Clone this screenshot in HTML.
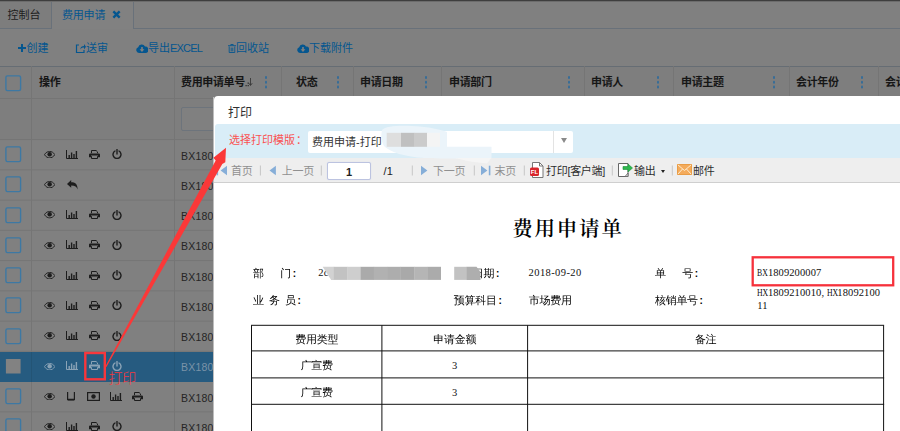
<!DOCTYPE html>
<html lang="zh-CN">
<head>
<meta charset="utf-8">
<title>费用申请</title>
<style>
html,body{margin:0;padding:0;}
body{width:900px;height:431px;overflow:hidden;position:relative;background:#808080;font-family:"Liberation Sans","Noto Sans CJK SC",sans-serif;font-size:11px;color:#1c1c1c;}
.abs{position:absolute;}
#bg{position:absolute;left:0;top:0;width:900px;height:431px;overflow:hidden;}
.topline{left:0;top:0;width:900px;height:1px;background:#3e3e3e;border-bottom:1px solid #6c6c6c;}
.tabbar{left:0;top:2px;width:900px;height:26px;border-bottom:1px solid #69717a;background:#808080;}
.tab{position:absolute;top:0;height:26px;line-height:27px;font-size:11px;text-align:center;box-sizing:border-box;white-space:nowrap;}
.tab1{left:0;width:52px;background:#7d7d7d;color:#1e1e1e;border-right:1px solid #69717a;text-align:left;padding-left:7.5px;}
.tab2{left:52px;width:82px;height:27px;background:#818181;color:#05568f;border-right:1px solid #69717a;text-align:left;padding-left:10px;letter-spacing:-0.2px;}
.tbtn{position:absolute;top:39px;height:18px;line-height:18px;color:#05568f;font-size:11px;white-space:nowrap;}
.tbtn svg{position:absolute;top:4px;}
.hline{position:absolute;left:0;width:900px;height:1px;}
.vline{position:absolute;top:66px;width:1px;height:365px;background:#757575;}
.hcell{position:absolute;top:67px;height:31px;line-height:30px;font-weight:bold;color:#161616;font-size:11px;white-space:nowrap;letter-spacing:-0.35px;}
.dots{position:absolute;top:76.300px;width:2.400px;height:2.400px;border-radius:50%;background:#376d98;box-shadow:0 4.700px 0 #376d98,0 9.400px 0 #376d98;}
.cb{position:absolute;left:5px;width:15px;height:15px;border:1px solid #3f7eaa;background:#808080;border-radius:1px;}
.bx{position:absolute;left:181px;font-size:10.5px;color:#252525;line-height:30px;height:30px;letter-spacing:0.2px;}
.ico{position:absolute;}
.sel{left:0;width:900px;background:#265b80;}
#modal{left:214px;top:96px;width:700px;height:400px;background:#fff;border-radius:4px 0 0 0;}
.m{position:absolute;white-space:nowrap;}
.tb{position:absolute;top:63px;height:24px;line-height:24px;font-size:11px;white-space:nowrap;letter-spacing:-0.3px;}
.sep{position:absolute;top:69px;width:1px;height:10px;background:#c9c9c9;}
.rp{position:absolute;white-space:nowrap;font-family:"Liberation Serif","WenQuanYi Zen Hei",serif;font-size:11px;color:#000;line-height:14px;letter-spacing:-0.3px;}
.cl{font-family:"Liberation Sans",sans-serif;font-weight:bold;font-size:10px;margin-left:1.8px;letter-spacing:0;}
.lat{font-family:"Liberation Serif",serif;font-size:10.5px;letter-spacing:0.1px;color:#111;}
.lt{display:inline-block;width:10.7px;transform:scaleX(0.74);transform-origin:0 50%;letter-spacing:0;}
.cell{position:absolute;text-align:center;font-family:"Liberation Serif","WenQuanYi Zen Hei",serif;font-size:11px;color:#000;line-height:14px;letter-spacing:-0.3px;}
</style>
</head>
<body>
<div id="bg">
  <div class="abs topline"></div>
  <div class="abs tabbar">
    <div class="tab tab1">控制台</div>
    <div class="tab tab2">费用申请<svg style="position:absolute;left:59.500px;top:8.300px" width="9" height="9" viewBox="0 0 8 8"><path d="M1.200 1.200L6.800 6.800M6.800 1.200L1.200 6.800" stroke="#05568f" stroke-width="2.100" fill="none"/></svg><span style="font-size:0">×</span></div>
  </div>
  <div class="tbtn" style="left:26.500px;"><svg style="left:-8.500px;top:4.800px" width="8" height="8" viewBox="0 0 8 8"><path d="M4 0V8M0 4H8" stroke="#05568f" stroke-width="2" fill="none"/></svg><span style="font-size:0">+</span>创建</div>
  <div class="tbtn" style="left:86px;"><svg style="left:-11px" width="11" height="11" viewBox="0 0 11 11"><path d="M4 2H1.5v7.5H9V7" fill="none" stroke="#05568f" stroke-width="1.2"/><path d="M5 6.5C5.5 4 7 3 9 3V1l2 2.8L9 6.5V4.6C7.5 4.6 6 5 5 6.5z" fill="#05568f"/></svg>送审</div>
  <div class="tbtn" style="left:148px;"><svg style="left:-12px;top:5px" width="12" height="9" viewBox="0 0 12 9"><path d="M3 9A3 3 0 0 1 2.2 3.2 3.6 3.6 0 0 1 9 2.6 3.2 3.2 0 0 1 9.4 9z" fill="#05568f"/><path d="M6 8L3.6 5.3h1.6V3h1.6v2.3h1.6z" fill="#808080"/></svg>导出<span style="letter-spacing:-0.8px">EXCEL</span></div>
  <div class="tbtn" style="left:236px;"><svg style="left:-8px;top:4.500px" width="8" height="9" viewBox="0 0 8 9"><path d="M0 1.700h8M2.800 1.500V.5h2.400v1M1.200 2.500v6h5.600v-6M3.200 3.600v3.800M4.800 3.600v3.800" fill="none" stroke="#05568f" stroke-width="0.900"/></svg>回收站</div>
  <div class="tbtn" style="left:309px;"><svg style="left:-12px;top:5px" width="12" height="9" viewBox="0 0 12 9"><path d="M3 9A3 3 0 0 1 2.2 3.2 3.6 3.6 0 0 1 9 2.6 3.2 3.2 0 0 1 9.4 9z" fill="#05568f"/><path d="M6 8L3.6 5.3h1.6V3h1.6v2.3h1.6z" fill="#808080"/></svg>下载附件</div>
  <div class="abs" style="left:0;top:66px;width:900px;height:74px;background:#7e7e7e;"></div>
  <div class="hline" style="top:66px;background:#666d74;"></div>
  <div class="hline" style="top:98px;background:#757575;"></div>
  <svg class="abs" style="left:0;top:0" width="900" height="431" viewBox="0 0 900 431"><rect x="0" y="139.10" width="900" height="1" fill="#757575"/><rect x="0" y="169.35" width="900" height="1" fill="#757575"/><rect x="0" y="199.60" width="900" height="1" fill="#757575"/><rect x="0" y="229.85" width="900" height="1" fill="#757575"/><rect x="0" y="260.10" width="900" height="1" fill="#757575"/><rect x="0" y="290.35" width="900" height="1" fill="#757575"/><rect x="0" y="320.60" width="900" height="1" fill="#757575"/><rect x="0" y="350.85" width="900" height="1" fill="#757575"/><rect x="0" y="411.35" width="900" height="1" fill="#757575"/></svg>
  <div class="vline" style="left:31px;"></div>
  <div class="vline" style="left:174px;"></div>
  <div class="vline" style="left:281px;"></div>
  <div class="vline" style="left:353px;"></div>
  <div class="vline" style="left:441px;"></div>
  <div class="vline" style="left:584px;"></div>
  <div class="vline" style="left:673px;"></div>
  <div class="vline" style="left:789px;"></div>
  <div class="vline" style="left:878px;"></div>
  <div class="abs sel" style="top:352px;height:30px;"></div>
  <div class="abs" style="left:31px;top:352px;width:1px;height:30px;background:#235475;"></div>
  <div class="abs" style="left:174px;top:352px;width:1px;height:30px;background:#235475;"></div>
  <div class="hcell" style="left:39px;">操作</div>
  <div class="hcell" style="left:181px;">费用申请单号</div>
  <div class="dots" style="left:265px;"></div>
  <div class="hcell" style="left:296px;">状态</div>
  <div class="dots" style="left:337px;"></div>
  <div class="hcell" style="left:360px;">申请日期</div>
  <div class="dots" style="left:425px;"></div>
  <div class="hcell" style="left:449px;">申请部门</div>
  <div class="dots" style="left:568px;"></div>
  <div class="hcell" style="left:591px;">申请人</div>
  <div class="dots" style="left:657px;"></div>
  <div class="hcell" style="left:681px;">申请主题</div>
  <div class="dots" style="left:773px;"></div>
  <div class="hcell" style="left:796px;">会计年份</div>
  <div class="dots" style="left:861px;"></div>
  <div class="hcell" style="left:885px;">会计期间</div>
  <svg class="abs" style="left:245px;top:78px" width="8" height="9" viewBox="0 0 8 9"><path d="M5.500 0V7M3.800 5.200L5.500 7.500 7.200 5.200" stroke="#303030" stroke-width="0.800" fill="none"/><path d="M0.500 7h1.200v1.200h-1.200zM2.600 7h1.200v1.200h-1.200zM2.600 4.600h1.200v1.200h-1.200z" fill="#2a2a2a"/></svg>
  <svg class="ico" style="left:4px;top:73.65px" width="19" height="19" viewBox="0 0 19 19"><rect x="1.900" y="1.900" width="14.700" height="14.700" rx="1.500" fill="none" stroke="#3d78a3" stroke-width="1.400"/></svg>
  <div class="abs" style="left:181px;top:107px;width:96px;height:22px;border:1px solid #6d747c;background:#808080;border-radius:2px;"></div>
  <svg class="ico" style="left:4px;top:145.15px" width="19" height="19" viewBox="0 0 19 19"><rect x="1.900" y="1.900" width="14.700" height="14.700" rx="1.500" fill="none" stroke="#3d78a3" stroke-width="1.400"/></svg>
  <svg class="ico" style="left:44.2px;top:150.9px" width="11.3" height="7.3" viewBox="0 0 12 8"><path d="M0.3 4C2 1.3 4 .5 6 .5s4 .8 5.7 3.500C10 6.700 8 7.500 6 7.500S2 6.700 .3 4z" fill="none" stroke="#1d1d1d" stroke-width="1"/><circle cx="6" cy="3.6" r="2.4" fill="#1d1d1d"/></svg><svg class="ico" style="left:65.5px;top:149.5px" width="12" height="9" viewBox="0 0 12 9"><path d="M.5 0v8.5H12" fill="none" stroke="#1d1d1d" stroke-width="1"/><path d="M2.5 5h1.4v3H2.5zM4.9 2.5h1.4V8H4.9zM7.3 4h1.4v4H7.3zM9.7 1h1.4v7H9.7z" fill="#1d1d1d"/></svg><svg class="ico" style="left:88.5px;top:149.5px" width="11" height="9" viewBox="0 0 11 9"><path d="M2.5 3.2V.5h4.6L8.5 1.9v1.3" fill="none" stroke="#1d1d1d" stroke-width="1"/><path d="M0 4.6A1.2 1.2 0 0 1 1.2 3.4h8.6A1.2 1.2 0 0 1 11 4.6V7.2H9V5.6H2V7.2H0z" fill="#1d1d1d"/><path d="M2.5 6.2v2.3h6V6.2" fill="none" stroke="#1d1d1d" stroke-width="1"/></svg><svg class="ico" style="left:112.0px;top:149.0px" width="10" height="10" viewBox="0 0 10 10"><path d="M3 2A4 4 0 1 0 7 2" fill="none" stroke="#1d1d1d" stroke-width="1.4" stroke-linecap="round"/><path d="M5 .6V5" stroke="#1d1d1d" stroke-width="1.4" stroke-linecap="round"/></svg>
  <div class="bx" style="top:140.50px;">BX1809200</div>
  <svg class="ico" style="left:4px;top:175.40px" width="19" height="19" viewBox="0 0 19 19"><rect x="1.900" y="1.900" width="14.700" height="14.700" rx="1.500" fill="none" stroke="#3d78a3" stroke-width="1.400"/></svg>
  <svg class="ico" style="left:44.2px;top:181.2px" width="11.3" height="7.3" viewBox="0 0 12 8"><path d="M0.3 4C2 1.3 4 .5 6 .5s4 .8 5.7 3.500C10 6.700 8 7.500 6 7.500S2 6.700 .3 4z" fill="none" stroke="#1d1d1d" stroke-width="1"/><circle cx="6" cy="3.6" r="2.4" fill="#1d1d1d"/></svg><svg class="ico" style="left:67.0px;top:179.8px" width="11" height="10" viewBox="0 0 11 10"><path d="M4.2 0v2.2C8 2.2 10.8 4 10.6 9.6 9.8 7 8 5.6 4.2 5.6V7.8L0 3.9z" fill="#1d1d1d"/></svg>
  <div class="bx" style="top:170.75px;">BX1809200</div>
  <svg class="ico" style="left:4px;top:205.65px" width="19" height="19" viewBox="0 0 19 19"><rect x="1.900" y="1.900" width="14.700" height="14.700" rx="1.500" fill="none" stroke="#3d78a3" stroke-width="1.400"/></svg>
  <svg class="ico" style="left:44.2px;top:211.4px" width="11.3" height="7.3" viewBox="0 0 12 8"><path d="M0.3 4C2 1.3 4 .5 6 .5s4 .8 5.7 3.500C10 6.700 8 7.500 6 7.500S2 6.700 .3 4z" fill="none" stroke="#1d1d1d" stroke-width="1"/><circle cx="6" cy="3.6" r="2.4" fill="#1d1d1d"/></svg><svg class="ico" style="left:65.5px;top:210.0px" width="12" height="9" viewBox="0 0 12 9"><path d="M.5 0v8.5H12" fill="none" stroke="#1d1d1d" stroke-width="1"/><path d="M2.5 5h1.4v3H2.5zM4.9 2.5h1.4V8H4.9zM7.3 4h1.4v4H7.3zM9.7 1h1.4v7H9.7z" fill="#1d1d1d"/></svg><svg class="ico" style="left:88.5px;top:210.0px" width="11" height="9" viewBox="0 0 11 9"><path d="M2.5 3.2V.5h4.6L8.5 1.9v1.3" fill="none" stroke="#1d1d1d" stroke-width="1"/><path d="M0 4.6A1.2 1.2 0 0 1 1.2 3.4h8.6A1.2 1.2 0 0 1 11 4.6V7.2H9V5.6H2V7.2H0z" fill="#1d1d1d"/><path d="M2.5 6.2v2.3h6V6.2" fill="none" stroke="#1d1d1d" stroke-width="1"/></svg><svg class="ico" style="left:112.0px;top:209.5px" width="10" height="10" viewBox="0 0 10 10"><path d="M3 2A4 4 0 1 0 7 2" fill="none" stroke="#1d1d1d" stroke-width="1.4" stroke-linecap="round"/><path d="M5 .6V5" stroke="#1d1d1d" stroke-width="1.4" stroke-linecap="round"/></svg>
  <div class="bx" style="top:201.00px;">BX1809200</div>
  <svg class="ico" style="left:4px;top:235.90px" width="19" height="19" viewBox="0 0 19 19"><rect x="1.900" y="1.900" width="14.700" height="14.700" rx="1.500" fill="none" stroke="#3d78a3" stroke-width="1.400"/></svg>
  <svg class="ico" style="left:44.2px;top:241.7px" width="11.3" height="7.3" viewBox="0 0 12 8"><path d="M0.3 4C2 1.3 4 .5 6 .5s4 .8 5.7 3.500C10 6.700 8 7.500 6 7.500S2 6.700 .3 4z" fill="none" stroke="#1d1d1d" stroke-width="1"/><circle cx="6" cy="3.6" r="2.4" fill="#1d1d1d"/></svg><svg class="ico" style="left:65.5px;top:240.2px" width="12" height="9" viewBox="0 0 12 9"><path d="M.5 0v8.5H12" fill="none" stroke="#1d1d1d" stroke-width="1"/><path d="M2.5 5h1.4v3H2.5zM4.9 2.5h1.4V8H4.9zM7.3 4h1.4v4H7.3zM9.7 1h1.4v7H9.7z" fill="#1d1d1d"/></svg><svg class="ico" style="left:88.5px;top:240.2px" width="11" height="9" viewBox="0 0 11 9"><path d="M2.5 3.2V.5h4.6L8.5 1.9v1.3" fill="none" stroke="#1d1d1d" stroke-width="1"/><path d="M0 4.6A1.2 1.2 0 0 1 1.2 3.4h8.6A1.2 1.2 0 0 1 11 4.6V7.2H9V5.6H2V7.2H0z" fill="#1d1d1d"/><path d="M2.5 6.2v2.3h6V6.2" fill="none" stroke="#1d1d1d" stroke-width="1"/></svg><svg class="ico" style="left:112.0px;top:239.8px" width="10" height="10" viewBox="0 0 10 10"><path d="M3 2A4 4 0 1 0 7 2" fill="none" stroke="#1d1d1d" stroke-width="1.4" stroke-linecap="round"/><path d="M5 .6V5" stroke="#1d1d1d" stroke-width="1.4" stroke-linecap="round"/></svg>
  <div class="bx" style="top:231.25px;">BX1809200</div>
  <svg class="ico" style="left:4px;top:266.15px" width="19" height="19" viewBox="0 0 19 19"><rect x="1.900" y="1.900" width="14.700" height="14.700" rx="1.500" fill="none" stroke="#3d78a3" stroke-width="1.400"/></svg>
  <svg class="ico" style="left:44.2px;top:271.9px" width="11.3" height="7.3" viewBox="0 0 12 8"><path d="M0.3 4C2 1.3 4 .5 6 .5s4 .8 5.7 3.500C10 6.700 8 7.500 6 7.500S2 6.700 .3 4z" fill="none" stroke="#1d1d1d" stroke-width="1"/><circle cx="6" cy="3.6" r="2.4" fill="#1d1d1d"/></svg><svg class="ico" style="left:65.5px;top:270.5px" width="12" height="9" viewBox="0 0 12 9"><path d="M.5 0v8.5H12" fill="none" stroke="#1d1d1d" stroke-width="1"/><path d="M2.5 5h1.4v3H2.5zM4.9 2.5h1.4V8H4.9zM7.3 4h1.4v4H7.3zM9.7 1h1.4v7H9.7z" fill="#1d1d1d"/></svg><svg class="ico" style="left:88.5px;top:270.5px" width="11" height="9" viewBox="0 0 11 9"><path d="M2.5 3.2V.5h4.6L8.5 1.9v1.3" fill="none" stroke="#1d1d1d" stroke-width="1"/><path d="M0 4.6A1.2 1.2 0 0 1 1.2 3.4h8.6A1.2 1.2 0 0 1 11 4.6V7.2H9V5.6H2V7.2H0z" fill="#1d1d1d"/><path d="M2.5 6.2v2.3h6V6.2" fill="none" stroke="#1d1d1d" stroke-width="1"/></svg><svg class="ico" style="left:112.0px;top:270.0px" width="10" height="10" viewBox="0 0 10 10"><path d="M3 2A4 4 0 1 0 7 2" fill="none" stroke="#1d1d1d" stroke-width="1.4" stroke-linecap="round"/><path d="M5 .6V5" stroke="#1d1d1d" stroke-width="1.4" stroke-linecap="round"/></svg>
  <div class="bx" style="top:261.50px;">BX1809200</div>
  <svg class="ico" style="left:4px;top:296.40px" width="19" height="19" viewBox="0 0 19 19"><rect x="1.900" y="1.900" width="14.700" height="14.700" rx="1.500" fill="none" stroke="#3d78a3" stroke-width="1.400"/></svg>
  <svg class="ico" style="left:44.2px;top:302.1px" width="11.3" height="7.3" viewBox="0 0 12 8"><path d="M0.3 4C2 1.3 4 .5 6 .5s4 .8 5.7 3.500C10 6.700 8 7.500 6 7.500S2 6.700 .3 4z" fill="none" stroke="#1d1d1d" stroke-width="1"/><circle cx="6" cy="3.6" r="2.4" fill="#1d1d1d"/></svg><svg class="ico" style="left:65.5px;top:300.8px" width="12" height="9" viewBox="0 0 12 9"><path d="M.5 0v8.5H12" fill="none" stroke="#1d1d1d" stroke-width="1"/><path d="M2.5 5h1.4v3H2.5zM4.9 2.5h1.4V8H4.9zM7.3 4h1.4v4H7.3zM9.7 1h1.4v7H9.7z" fill="#1d1d1d"/></svg><svg class="ico" style="left:88.5px;top:300.8px" width="11" height="9" viewBox="0 0 11 9"><path d="M2.5 3.2V.5h4.6L8.5 1.9v1.3" fill="none" stroke="#1d1d1d" stroke-width="1"/><path d="M0 4.6A1.2 1.2 0 0 1 1.2 3.4h8.6A1.2 1.2 0 0 1 11 4.6V7.2H9V5.6H2V7.2H0z" fill="#1d1d1d"/><path d="M2.5 6.2v2.3h6V6.2" fill="none" stroke="#1d1d1d" stroke-width="1"/></svg><svg class="ico" style="left:112.0px;top:300.2px" width="10" height="10" viewBox="0 0 10 10"><path d="M3 2A4 4 0 1 0 7 2" fill="none" stroke="#1d1d1d" stroke-width="1.4" stroke-linecap="round"/><path d="M5 .6V5" stroke="#1d1d1d" stroke-width="1.4" stroke-linecap="round"/></svg>
  <div class="bx" style="top:291.75px;">BX1809200</div>
  <svg class="ico" style="left:4px;top:326.65px" width="19" height="19" viewBox="0 0 19 19"><rect x="1.900" y="1.900" width="14.700" height="14.700" rx="1.500" fill="none" stroke="#3d78a3" stroke-width="1.400"/></svg>
  <svg class="ico" style="left:44.2px;top:332.4px" width="11.3" height="7.3" viewBox="0 0 12 8"><path d="M0.3 4C2 1.3 4 .5 6 .5s4 .8 5.7 3.500C10 6.700 8 7.500 6 7.500S2 6.700 .3 4z" fill="none" stroke="#1d1d1d" stroke-width="1"/><circle cx="6" cy="3.6" r="2.4" fill="#1d1d1d"/></svg><svg class="ico" style="left:65.5px;top:331.0px" width="12" height="9" viewBox="0 0 12 9"><path d="M.5 0v8.5H12" fill="none" stroke="#1d1d1d" stroke-width="1"/><path d="M2.5 5h1.4v3H2.5zM4.9 2.5h1.4V8H4.9zM7.3 4h1.4v4H7.3zM9.7 1h1.4v7H9.7z" fill="#1d1d1d"/></svg><svg class="ico" style="left:88.5px;top:331.0px" width="11" height="9" viewBox="0 0 11 9"><path d="M2.5 3.2V.5h4.6L8.5 1.9v1.3" fill="none" stroke="#1d1d1d" stroke-width="1"/><path d="M0 4.6A1.2 1.2 0 0 1 1.2 3.4h8.6A1.2 1.2 0 0 1 11 4.6V7.2H9V5.6H2V7.2H0z" fill="#1d1d1d"/><path d="M2.5 6.2v2.3h6V6.2" fill="none" stroke="#1d1d1d" stroke-width="1"/></svg><svg class="ico" style="left:112.0px;top:330.5px" width="10" height="10" viewBox="0 0 10 10"><path d="M3 2A4 4 0 1 0 7 2" fill="none" stroke="#1d1d1d" stroke-width="1.4" stroke-linecap="round"/><path d="M5 .6V5" stroke="#1d1d1d" stroke-width="1.4" stroke-linecap="round"/></svg>
  <div class="bx" style="top:322.00px;">BX1809200</div>
  <svg class="ico" style="left:4px;top:356.90px" width="19" height="19" viewBox="0 0 19 19"><rect x="1.900" y="1.900" width="14.700" height="14.700" rx="0.500" fill="#828282"/></svg>
  <svg class="ico" style="left:44.2px;top:362.6px" width="11.3" height="7.3" viewBox="0 0 12 8"><path d="M0.3 4C2 1.3 4 .5 6 .5s4 .8 5.7 3.500C10 6.700 8 7.500 6 7.500S2 6.700 .3 4z" fill="none" stroke="#8aa3b6" stroke-width="1"/><circle cx="6" cy="3.6" r="2.4" fill="#8aa3b6"/></svg><svg class="ico" style="left:65.5px;top:361.2px" width="12" height="9" viewBox="0 0 12 9"><path d="M.5 0v8.5H12" fill="none" stroke="#8aa3b6" stroke-width="1"/><path d="M2.5 5h1.4v3H2.5zM4.9 2.5h1.4V8H4.9zM7.3 4h1.4v4H7.3zM9.7 1h1.4v7H9.7z" fill="#8aa3b6"/></svg><svg class="ico" style="left:88.5px;top:361.2px" width="11" height="9" viewBox="0 0 11 9"><path d="M2.5 3.2V.5h4.6L8.5 1.9v1.3" fill="none" stroke="#8aa3b6" stroke-width="1"/><path d="M0 4.6A1.2 1.2 0 0 1 1.2 3.4h8.6A1.2 1.2 0 0 1 11 4.6V7.2H9V5.6H2V7.2H0z" fill="#8aa3b6"/><path d="M2.5 6.2v2.3h6V6.2" fill="none" stroke="#8aa3b6" stroke-width="1"/></svg><svg class="ico" style="left:112.0px;top:360.8px" width="10" height="10" viewBox="0 0 10 10"><path d="M3 2A4 4 0 1 0 7 2" fill="none" stroke="#8aa3b6" stroke-width="1.4" stroke-linecap="round"/><path d="M5 .6V5" stroke="#8aa3b6" stroke-width="1.4" stroke-linecap="round"/></svg>
  <div class="bx" style="top:352.25px;color:#7a93a8;">BX1809200</div>
  <svg class="ico" style="left:4px;top:387.15px" width="19" height="19" viewBox="0 0 19 19"><rect x="1.900" y="1.900" width="14.700" height="14.700" rx="1.500" fill="none" stroke="#3d78a3" stroke-width="1.400"/></svg>
  <svg class="ico" style="left:44.2px;top:392.9px" width="11.3" height="7.3" viewBox="0 0 12 8"><path d="M0.3 4C2 1.3 4 .5 6 .5s4 .8 5.7 3.500C10 6.700 8 7.500 6 7.500S2 6.700 .3 4z" fill="none" stroke="#1d1d1d" stroke-width="1"/><circle cx="6" cy="3.6" r="2.4" fill="#1d1d1d"/></svg><svg class="ico" style="left:66.5px;top:392.0px" width="8" height="9" viewBox="0 0 8 9"><path d="M.6 0v7.4h6.8V0" fill="none" stroke="#1d1d1d" stroke-width="1.2"/><path d="M.6 7h6.8v1.6H.6z" fill="#1d1d1d"/></svg><svg class="ico" style="left:87.0px;top:392.0px" width="13" height="9" viewBox="0 0 13 9"><rect x=".6" y=".6" width="11.8" height="7.8" fill="none" stroke="#1d1d1d" stroke-width="1.2"/><circle cx="6.5" cy="4.5" r="2.2" fill="#1d1d1d"/></svg><svg class="ico" style="left:110.0px;top:391.5px" width="12" height="9" viewBox="0 0 12 9"><path d="M.5 0v8.5H12" fill="none" stroke="#1d1d1d" stroke-width="1"/><path d="M2.5 5h1.4v3H2.5zM4.9 2.5h1.4V8H4.9zM7.3 4h1.4v4H7.3zM9.7 1h1.4v7H9.7z" fill="#1d1d1d"/></svg><svg class="ico" style="left:132.0px;top:391.5px" width="11" height="9" viewBox="0 0 11 9"><path d="M2.5 3.2V.5h4.6L8.5 1.9v1.3" fill="none" stroke="#1d1d1d" stroke-width="1"/><path d="M0 4.6A1.2 1.2 0 0 1 1.2 3.4h8.6A1.2 1.2 0 0 1 11 4.6V7.2H9V5.6H2V7.2H0z" fill="#1d1d1d"/><path d="M2.5 6.2v2.3h6V6.2" fill="none" stroke="#1d1d1d" stroke-width="1"/></svg>
  <div class="bx" style="top:382.50px;">BX1809200</div>
  <svg class="ico" style="left:4px;top:417.40px" width="19" height="19" viewBox="0 0 19 19"><rect x="1.900" y="1.900" width="14.700" height="14.700" rx="1.500" fill="none" stroke="#3d78a3" stroke-width="1.400"/></svg>
  <svg class="ico" style="left:44.2px;top:423.1px" width="11.3" height="7.3" viewBox="0 0 12 8"><path d="M0.3 4C2 1.3 4 .5 6 .5s4 .8 5.7 3.500C10 6.700 8 7.500 6 7.500S2 6.700 .3 4z" fill="none" stroke="#1d1d1d" stroke-width="1"/><circle cx="6" cy="3.6" r="2.4" fill="#1d1d1d"/></svg><svg class="ico" style="left:65.5px;top:421.8px" width="12" height="9" viewBox="0 0 12 9"><path d="M.5 0v8.5H12" fill="none" stroke="#1d1d1d" stroke-width="1"/><path d="M2.5 5h1.4v3H2.5zM4.9 2.5h1.4V8H4.9zM7.3 4h1.4v4H7.3zM9.7 1h1.4v7H9.7z" fill="#1d1d1d"/></svg><svg class="ico" style="left:88.5px;top:421.8px" width="11" height="9" viewBox="0 0 11 9"><path d="M2.5 3.2V.5h4.6L8.5 1.9v1.3" fill="none" stroke="#1d1d1d" stroke-width="1"/><path d="M0 4.6A1.2 1.2 0 0 1 1.2 3.4h8.6A1.2 1.2 0 0 1 11 4.6V7.2H9V5.6H2V7.2H0z" fill="#1d1d1d"/><path d="M2.5 6.2v2.3h6V6.2" fill="none" stroke="#1d1d1d" stroke-width="1"/></svg><svg class="ico" style="left:112.0px;top:421.2px" width="10" height="10" viewBox="0 0 10 10"><path d="M3 2A4 4 0 1 0 7 2" fill="none" stroke="#1d1d1d" stroke-width="1.4" stroke-linecap="round"/><path d="M5 .6V5" stroke="#1d1d1d" stroke-width="1.4" stroke-linecap="round"/></svg>
  <div class="bx" style="top:412.75px;">BX1809200</div>
</div>
<div class="abs" style="left:213px;top:97px;width:1px;height:340px;background:#bdbdbd;"></div>
<div id="modal" class="abs">
  <div class="m" style="left:14px;top:7px;font-size:12px;line-height:20px;color:#303030;">打印</div>
  <div class="abs" style="left:1px;top:28px;width:700px;height:34px;background:#d9edf7;border-radius:3px 0 0 0;"></div>
  <div class="m" style="left:15px;top:35px;font-size:11px;line-height:18px;color:#fa5252;">选择打印模版<span style="margin-left:1px">：</span></div>
  <div class="abs" style="left:94px;top:35px;width:265px;height:22px;background:#fff;border-radius:2px;"></div>
  <div class="m" style="left:98px;top:37px;font-size:11px;line-height:18px;color:#333;">费用申请-打印</div>
  <div class="abs" style="left:339px;top:35px;width:1px;height:22px;background:#e3e3e3;"></div>
  <div class="abs" style="left:346.500px;top:41.500px;width:0;height:0;border-left:3.500px solid transparent;border-right:3.500px solid transparent;border-top:5px solid #8a8a8a;"></div>
  <div class="abs" style="left:0;top:62px;width:700px;height:24px;background:#eeeeee;border-bottom:1px solid #cfcfcf;"></div>
  <svg class="abs" style="left:0;top:0" width="700" height="100" viewBox="214 96 700 100">
    <path d="M382 130C386 126 400 125 420 126.500C432 127.500 442 130 447 132L447 146.700L491.500 146.700L491.500 158C470 159 440 158.500 425 158C405 157 390 152 384 146C381 141 381 134 382 130Z" fill="#ebf4fa"/>
    <path d="M455 158L491.500 158L487 163.500L470 161.500Z" fill="#f5f5f5"/>
    <rect x="386.700" y="132.800" width="14.500" height="14" fill="#dedede"/><rect x="401" y="132.800" width="13.200" height="14" fill="#c0c0c0"/><rect x="414" y="132.800" width="13.200" height="14" fill="#cbcbcb"/><rect x="427" y="132.800" width="13" height="14" fill="#f4f4f4"/>
  </svg>
  <svg class="abs" style="left:0;top:0" width="700" height="100" viewBox="214 96 700 100"><rect x="216.5" y="165.7" width="1.600" height="9.600" fill="#86aed8"/><path d="M220.6 170.5L227.0 165.7V175.3z" fill="#86aed8"/><path d="M269.5 170.5L275.9 165.7V175.3z" fill="#86aed8"/><path d="M427.4 170.5L421.0 165.7V175.3z" fill="#86aed8"/><path d="M487.4 170.5L481.0 165.7V175.3z" fill="#86aed8"/><rect x="488.8" y="165.7" width="1.600" height="9.600" fill="#86aed8"/><rect x="259.9" y="165.500" width="1" height="10" fill="#c6c6c6"/><rect x="320.8" y="165.500" width="1" height="10" fill="#c6c6c6"/><rect x="411.8" y="165.500" width="1" height="10" fill="#c6c6c6"/><rect x="473.8" y="165.500" width="1" height="10" fill="#c6c6c6"/><rect x="523.8" y="165.500" width="1" height="10" fill="#c6c6c6"/><rect x="611.8" y="165.500" width="1" height="10" fill="#c6c6c6"/><rect x="671.8" y="165.500" width="1" height="10" fill="#c6c6c6"/></svg>
  <div class="tb" style="left:17.0px;color:#909090;">首页</div>
  <div class="tb" style="left:67.8px;color:#909090;">上一页</div>
  <div class="abs" style="left:113px;top:66px;width:42px;height:15.500px;border:1px solid #bcc3e0;background:#fff;border-radius:2px;box-shadow:0 0 1px #c9cfea;"></div>
  <div class="tb" style="left:113px;width:44px;text-align:center;font-weight:bold;color:#222;top:63.500px;letter-spacing:0;">1</div>
  <div class="tb" style="left:169.5px;color:#222;letter-spacing:0.3px;">/1</div>
  <div class="tb" style="left:219.0px;color:#909090;">下一页</div>
  <div class="tb" style="left:280.5px;color:#909090;">末页</div>
  <svg class="abs" style="left:316px;top:66px" width="14" height="16" viewBox="0 0 14 16"><path d="M2.5 .5h7l3.5 3.500v11.500h-10.500z" fill="#fff" stroke="#777" stroke-width="1"/><path d="M9.500 .5v3.500h3.500" fill="none" stroke="#777"/><rect x="0" y="5.500" width="9" height="8.500" rx="1.500" fill="#d8262c"/><text x="4.500" y="12.200" font-size="6" font-weight="bold" fill="#fff" text-anchor="middle" font-family="Liberation Sans, sans-serif">FL</text></svg>
  <div class="tb" style="left:332.0px;color:#2e2e2e;">打印[客户端]</div>
  <svg class="abs" style="left:404px;top:66px" width="16" height="16" viewBox="0 0 16 16"><path d="M.5 1.500h9.500v13h-9.500z" fill="#fff" stroke="#666" stroke-width="1"/><path d="M10 11l-3 3.500h3z" fill="#ddd" stroke="#666" stroke-width=".8"/><path d="M5 4.500h5v-2.500l4.500 4-4.500 4v-2.500h-5z" fill="#2db84d" stroke="#1a8f37" stroke-width=".6"/></svg>
  <div class="tb" style="left:420.0px;color:#2e2e2e;">输出</div>
  <div class="abs" style="left:446.500px;top:73.500px;width:0;height:0;border-left:2.500px solid transparent;border-right:2.500px solid transparent;border-top:3.500px solid #222;"></div>
  <svg class="abs" style="left:463px;top:68px" width="15" height="11" viewBox="0 0 15 11"><rect x=".5" y=".5" width="14" height="10" fill="#f4ab5c" stroke="#e99c45"/><path d="M.8 .8L7.500 6.500 14.200 .8M.8 10.200L5.500 5M14.200 10.200L9.500 5" fill="none" stroke="#fdeccf" stroke-width="1"/></svg>
  <div class="tb" style="left:479.0px;color:#2e2e2e;">邮件</div>
  <div class="m" style="left:298.2px;top:118.2px;font-family:'Liberation Serif','Noto Serif CJK SC',serif;font-weight:600;font-size:20.5px;line-height:30px;letter-spacing:1.8px;color:#000;">费用申请单</div>
  <div class="rp " style="left:39.0px;top:170.2px;">部<span style="display:inline-block;width:16.6px"></span>门<span class="cl">:</span></div>
  <div class="rp " style="left:39.0px;top:196.8px;">业<span style="display:inline-block;width:5.3px"></span>务<span style="display:inline-block;width:5.3px"></span>员<span class="cl">:</span></div>
  <div class="rp lat" style="left:104.3px;top:170.2px;">2c</div>
  <div class="rp " style="left:258.8px;top:170.2px;">日期<span class="cl">:</span></div>
  <svg class="abs" style="left:0;top:0" width="700" height="340" viewBox="214 96 700 340"><path d="M322.600 266.800H334.200V279.900H331.200z" fill="#d2d2d2"/><rect x="333.8" y="266.8" width="13.8" height="13.1" fill="#c2c2c2"/><rect x="347.3" y="266.8" width="13.7" height="13.1" fill="#cecece"/><rect x="360.7" y="266.8" width="13.4" height="13.1" fill="#aaaaaa"/><rect x="373.8" y="266.8" width="14.3" height="13.1" fill="#b1b1b1"/><rect x="387.8" y="266.8" width="12.7" height="13.1" fill="#adadad"/><rect x="400.2" y="266.8" width="14.3" height="13.1" fill="#a9a9a9"/><rect x="414.2" y="266.8" width="13.7" height="13.1" fill="#b5b5b5"/><rect x="427.6" y="266.8" width="13.4" height="13.1" fill="#ababab"/><rect x="454.2" y="266.800" width="12.800" height="13.100" fill="#c2c2c2"/><path d="M466.700 266.800H476.500L480.500 272V279.900H466.700z" fill="#aeaeae"/></svg>
  <div class="rp " style="left:239.8px;top:196.8px;">预算科目<span class="cl">:</span></div>
  <div class="rp lat" style="left:314.6px;top:170.2px;letter-spacing:0.4px;">2018-09-20</div>
  <div class="rp " style="left:314.8px;top:196.8px;">市场费用</div>
  <div class="rp " style="left:441.0px;top:170.2px;">单<span style="display:inline-block;width:16.6px"></span>号<span class="cl">:</span></div>
  <div class="rp " style="left:441.0px;top:196.8px;">核销单号<span class="cl">:</span></div>
  <div class="rp lat" style="left:543.2px;top:170.2px;"><span class="lt">BX</span>1809200007</div>
  <div class="rp lat" style="left:543.2px;top:191.3px;line-height:12.6px;"><span class="lt">HX</span>1809210010<span style="display:inline-block;width:5.3px">,</span><span class="lt">HX</span>18092100<br>11</div>
  <svg class="abs" style="left:0;top:0" width="700" height="340" viewBox="214 96 700 340"><rect x="752.700" y="257.300" width="140.500" height="28" fill="none" stroke="#f6313b" stroke-width="2.300"/></svg>
  <svg class="abs" style="left:0;top:0" width="700" height="340" viewBox="214 96 700 340"><path d="M251.0 325.3H884.1M251.0 350.9H884.1M251.0 377.9H884.1M251.0 404.3H884.1M251.5 325.3V440.0M381.9 325.3V440.0M527.6 325.3V440.0M883.6 325.3V440.0" fill="none" stroke="#111" stroke-width="1"/></svg>
  <div class="cell" style="left:37.5px;top:235.8px;width:130.4px;">费用类型</div>
  <div class="cell" style="left:167.9px;top:235.8px;width:145.7px;">申请金额</div>
  <div class="cell" style="left:313.6px;top:235.8px;width:356.0px;">备注</div>
  <div class="cell" style="left:37.5px;top:262.1px;width:130.4px;">广宣费</div>
  <div class="cell" style="left:167.9px;top:262.1px;width:145.7px;"><span class="lat">3</span></div>
  <div class="cell" style="left:37.5px;top:288.8px;width:130.4px;">广宣费</div>
  <div class="cell" style="left:167.9px;top:288.8px;width:145.7px;"><span class="lat">3</span></div>
</div>
<svg class="abs" style="left:0;top:0;" width="900" height="431" viewBox="0 0 900 431">
<rect x="85.300" y="353" width="19.500" height="26.300" fill="none" stroke="#f8373c" stroke-width="2.400"/>
<path d="M105.200 366.700L215.700 160.400 213.400 157.800 226 147.700 225.300 162.300 222.300 164 106.400 367.100z" fill="#fb3838"/>
</svg>
<div class="abs" style="left:108.500px;top:368.500px;font-size:14px;line-height:18px;font-weight:300;color:#f8373c;white-space:nowrap;letter-spacing:-0.3px;">打印</div>
</body>
</html>
